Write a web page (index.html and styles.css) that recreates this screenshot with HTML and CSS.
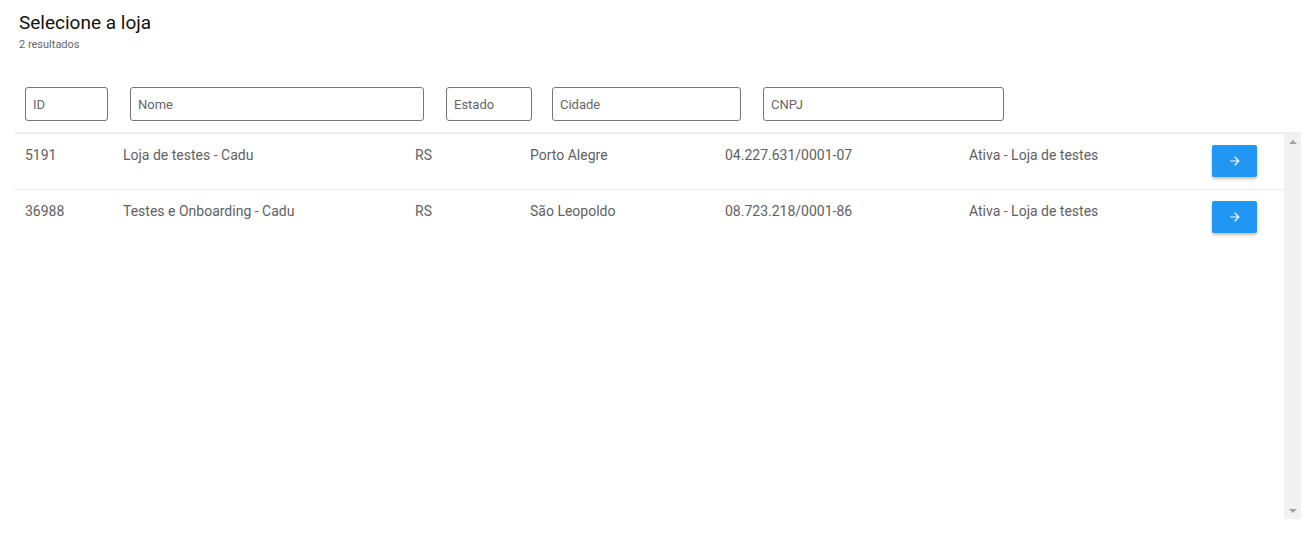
FILE: index.html
```html
<!DOCTYPE html>
<html lang="pt-BR">
<head>
  <meta charset="UTF-8">
  <title>Selecione a loja</title>
  <link rel="stylesheet" href="styles.css">
</head>
<body>
  <div class="page">
    <header class="page-header">
      <h1 class="title">Selecione a loja</h1>
      <p class="subtitle">2 resultados</p>
    </header>

    <div class="filters">
      <input class="filter filter-id" placeholder="ID">
      <input class="filter filter-nome" placeholder="Nome">
      <input class="filter filter-estado" placeholder="Estado">
      <input class="filter filter-cidade" placeholder="Cidade">
      <input class="filter filter-cnpj" placeholder="CNPJ">
    </div>

    <div class="table-wrap">
      <div class="table">
        <div class="row">
          <div class="cell">5191</div>
          <div class="cell">Loja de testes - Cadu</div>
          <div class="cell">RS</div>
          <div class="cell">Porto Alegre</div>
          <div class="cell">04.227.631/0001-07</div>
          <div class="cell">Ativa - Loja de testes</div>
          <div class="cell cell-action">
            <button class="go-button">
              <svg viewBox="0 0 24 24" width="14" height="14"><path d="M12 4l-1.41 1.41L16.17 11H4v2h12.17l-5.58 5.59L12 20l8-8z" fill="#fff"/></svg>
            </button>
          </div>
        </div>
        <div class="row">
          <div class="cell">36988</div>
          <div class="cell">Testes e Onboarding - Cadu</div>
          <div class="cell">RS</div>
          <div class="cell">São Leopoldo</div>
          <div class="cell">08.723.218/0001-86</div>
          <div class="cell">Ativa - Loja de testes</div>
          <div class="cell cell-action">
            <button class="go-button">
              <svg viewBox="0 0 24 24" width="14" height="14"><path d="M12 4l-1.41 1.41L16.17 11H4v2h12.17l-5.58 5.59L12 20l8-8z" fill="#fff"/></svg>
            </button>
          </div>
        </div>
      </div>

      <!-- fake scrollbar -->
      <div class="scrollbar">
        <span class="arrow arrow-up"></span>
        <span class="arrow arrow-down"></span>
      </div>
    </div>
  </div>
</body>
</html>
```

FILE: styles.css
```css
:root {
  --text: #616161;
  --border: #777777;
  --line: #eeeeee;
  --blue: #2196f3;
}

body {
  margin: 0;
  font-family: Roboto, 'Noto Sans', sans-serif;
  background: #ffffff;
  color: var(--text);
}

.page {
  padding: 0 11px 0 14px;
}

.page-header {
  padding: 11px 0 0 5px;
}

.title {
  margin: 0;
  font-size: 19px;
  font-weight: 400;
  line-height: 24px;
  color: #111111;
}

.subtitle {
  margin: 3px 0 0;
  font-size: 11px;
  line-height: 14px;
  color: #666666;
}

.filters {
  display: flex;
  gap: 22px;
  padding: 35px 0 0 11px;
  height: 34px;
}

.filter {
  box-sizing: border-box;
  height: 34px;
  border: 1px solid var(--border);
  border-radius: 3px;
  padding: 0 7px;
  font-family: Roboto, 'Noto Sans', sans-serif;
  font-size: 13px;
  color: var(--text);
  outline: none;
}

.filter::placeholder {
  color: #666666;
}

.filter-id { width: 83px; }
.filter-nome { width: 294px; }
.filter-estado { width: 86px; }
.filter-cidade { width: 189px; margin-left: -2px; }
.filter-cnpj { width: 241px; }

.table-wrap {
  display: flex;
  margin-top: 11px;
  border-top: 2px solid var(--line);
  height: 385px;
}

.table {
  flex: 1;
}

.row {
  display: grid;
  grid-template-columns: 98px 292px 115px 195px 244px 243px 1fr;
  height: 56px;
  border-bottom: 1px solid var(--line);
  box-sizing: border-box;
}

.row:last-child {
  border-bottom: none;
}

.cell {
  padding: 13px 0 0 11px;
  font-size: 14px;
  line-height: 16px;
}

.cell-action {
  padding-top: 11px;
}

.go-button {
  width: 45px;
  height: 32px;
  border: none;
  border-radius: 2px;
  background-color: var(--blue);
  box-shadow: 0 2px 3px rgba(0, 0, 0, 0.25);
  cursor: pointer;
  display: flex;
  align-items: center;
  justify-content: center;
}

.scrollbar {
  width: 17px;
  background: #f1f1f1;
  display: flex;
  flex-direction: column;
  justify-content: space-between;
  align-items: center;
  padding: 6px 0;
  box-sizing: border-box;
}

.arrow {
  width: 0;
  height: 0;
  border-left: 4px solid transparent;
  border-right: 4px solid transparent;
}

.arrow-up {
  border-bottom: 4px solid #a3a3a3;
}

.arrow-down {
  border-top: 4px solid #a3a3a3;
}
```
